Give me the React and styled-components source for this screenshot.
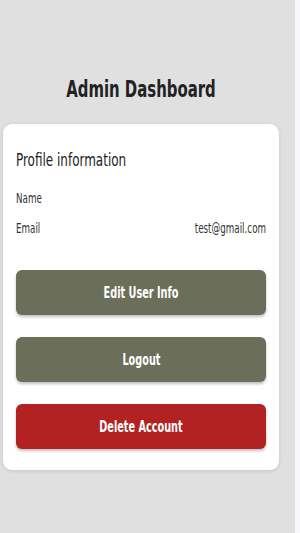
import React from 'react';
import styled, { createGlobalStyle } from 'styled-components';

const GlobalStyle = createGlobalStyle`
  html, body {
    margin: 0;
    padding: 0;
    background: #f7f8fc;
  }
  body {
    font-family: "DejaVu Sans Condensed", "Liberation Sans", sans-serif;
    color: #222;
  }
`;

const Page = styled.div`
  width: 295px;
  min-height: 533px;
  background: #e0e0e0;
  padding: 0 16px 0 3px;
  box-sizing: border-box;
  display: flex;
  flex-direction: column;
  align-items: stretch;
`;

const Title = styled.h1`
  margin: 76px 0 22px;
  text-align: center;
  font-size: 23px;
  font-weight: 700;
  color: #222;
  transform: scaleX(0.72);
`;

const Card = styled.div`
  background: #fff;
  border-radius: 9px;
  box-shadow: 0 1px 4px rgba(0, 0, 0, 0.12);
  padding: 25px 13px 21px 13px;
  display: flex;
  flex-direction: column;
`;

const Squeezed = styled.span`
  display: inline-block;
  transform: scaleX(0.72);
  transform-origin: ${(p) => p.origin || 'center'};
  white-space: nowrap;
`;

const CardTitle = styled.h2`
  margin: 0 0 19px;
  font-size: 18.5px;
  line-height: 22px;
  font-weight: 400;
  color: #222;
`;

const InfoRow = styled.div`
  display: flex;
  justify-content: space-between;
  align-items: center;
  font-size: 13.5px;
  line-height: 16px;
  color: #333;
  margin-bottom: 14px;
`;

const Actions = styled.div`
  display: flex;
  flex-direction: column;
  gap: 22px;
  margin-top: 20px;
`;

const Button = styled.button`
  height: 45px;
  border: none;
  border-radius: 6px;
  background: ${(p) => (p.danger ? '#b22222' : '#6b6e58')};
  color: #fff;
  font-family: inherit;
  font-size: 15px;
  font-weight: 700;
  box-shadow: 0 2px 3px rgba(0, 0, 0, 0.25);
  cursor: pointer;
`;

export default function App() {
  return (
    <>
      <GlobalStyle />
      <Page>
        <Title>Admin Dashboard</Title>
        <Card>
          <CardTitle>
            <Squeezed origin="left">Profile information</Squeezed>
          </CardTitle>
          <InfoRow>
            <Squeezed origin="left">Name</Squeezed>
            <span></span>
          </InfoRow>
          <InfoRow>
            <Squeezed origin="left">Email</Squeezed>
            <Squeezed origin="right">test@gmail.com</Squeezed>
          </InfoRow>
          <Actions>
            <Button><Squeezed>Edit User Info</Squeezed></Button>
            <Button><Squeezed>Logout</Squeezed></Button>
            <Button danger><Squeezed>Delete Account</Squeezed></Button>
          </Actions>
        </Card>
      </Page>
    </>
  );
}
